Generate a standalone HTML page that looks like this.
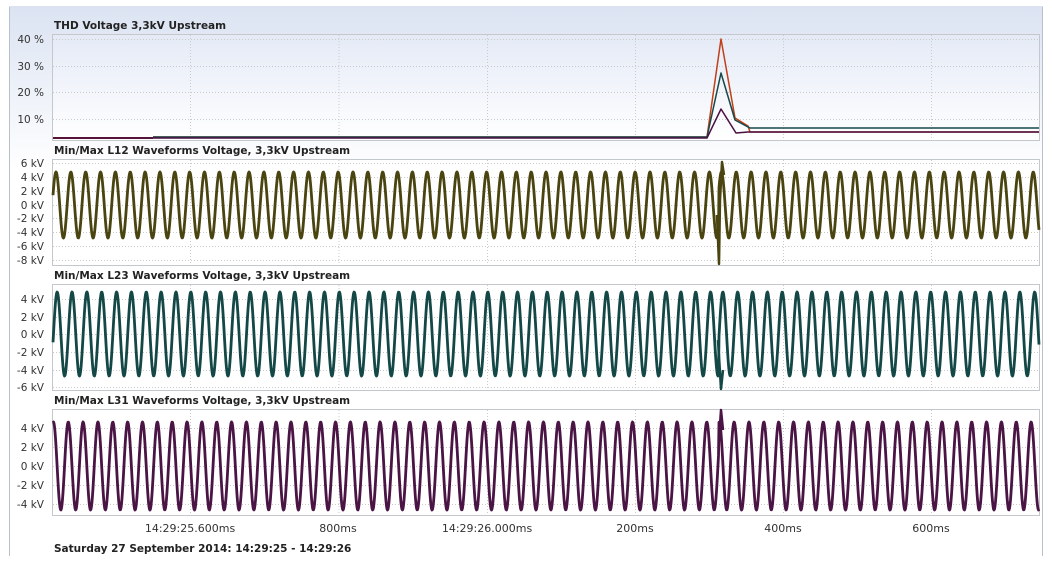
<!DOCTYPE html>
<html><head><meta charset="utf-8"><style>
html,body{margin:0;padding:0;width:1052px;height:566px;overflow:hidden;background:#fff;font-family:"DejaVu Sans","Liberation Sans",sans-serif;}
</style></head><body>
<svg id="s" width="1052" height="566" xmlns="http://www.w3.org/2000/svg" style="position:absolute;left:0;top:0">
<defs>
<linearGradient id="bg" x1="0" y1="0" x2="0" y2="1"><stop offset="0" stop-color="#dbe3f2"/><stop offset="0.3" stop-color="#ffffff"/><stop offset="1" stop-color="#ffffff"/></linearGradient>
<linearGradient id="thd" x1="0" y1="0" x2="0" y2="1"><stop offset="0" stop-color="#e4eaf6"/><stop offset="1" stop-color="#ffffff"/></linearGradient>
</defs>
<rect x="9" y="6" width="1034" height="550" fill="url(#bg)"/>
<line x1="9.5" y1="6" x2="9.5" y2="556" stroke="#b8c0cc"/>
<line x1="1042.5" y1="6" x2="1042.5" y2="556" stroke="#b8c0cc"/>
<line x1="9" y1="6.5" x2="1043" y2="6.5" stroke="#dde3ee"/>
<rect x="52.5" y="34.5" width="987" height="106" fill="url(#thd)" stroke="#c4c8cc"/>
<rect x="52.5" y="159.5" width="987" height="106" fill="#fff" stroke="#c4c8cc"/>
<rect x="52.5" y="284.5" width="987" height="106" fill="#fff" stroke="#c4c8cc"/>
<rect x="52.5" y="409.5" width="987" height="106" fill="#fff" stroke="#c4c8cc"/>
<g id="grid" stroke="#cacaca" stroke-dasharray="1,2" stroke-width="1"></g>
<g id="lines" fill="none" stroke-linejoin="round"></g>
<g font-size="10.5" fill="#222" font-weight="bold" font-family="'DejaVu Sans',sans-serif">
<text x="54" y="29">THD Voltage 3,3kV Upstream</text>
<text x="54" y="154">Min/Max L12 Waveforms Voltage, 3,3kV Upstream</text>
<text x="54" y="279">Min/Max L23 Waveforms Voltage, 3,3kV Upstream</text>
<text x="54" y="404">Min/Max L31 Waveforms Voltage, 3,3kV Upstream</text>
<text x="54" y="552">Saturday 27 September 2014: 14:29:25 - 14:29:26</text>
</g>
<g id="lab" font-size="10.5" fill="#333" text-anchor="end" font-family="'DejaVu Sans',sans-serif"></g>
<g font-size="11" fill="#333" text-anchor="middle" font-family="'DejaVu Sans',sans-serif">
<text x="190" y="532">14:29:25.600ms</text>
<text x="338" y="532">800ms</text>
<text x="487" y="532">14:29:26.000ms</text>
<text x="635" y="532">200ms</text>
<text x="783" y="532">400ms</text>
<text x="931" y="532">600ms</text>
</g>
</svg>
<script>
var NS="http://www.w3.org/2000/svg";
function el(p,t,a,txt){var e=document.createElementNS(NS,t);for(var k in a)e.setAttribute(k,a[k]);if(txt)e.textContent=txt;document.getElementById(p).appendChild(e);}
var vx=[190,338.5,487,635,783,931];
var panels=[[34,140,[39,66,92,119],["40 %","30 %","20 %","10 %"]],
[159,265,[163,177,191,205,218,232,246,260],["6 kV","4 kV","2 kV","0 kV","-2 kV","-4 kV","-6 kV","-8 kV"]],
[284,390,[299,317,334,352,370,387],["4 kV","2 kV","0 kV","-2 kV","-4 kV","-6 kV"]],
[409,515,[428,447,466,485,504],["4 kV","2 kV","0 kV","-2 kV","-4 kV"]]];
panels.forEach(function(p){
 vx.forEach(function(x){el("grid","line",{x1:x+.5,y1:p[0]+1,x2:x+.5,y2:p[1]});});
 p[2].forEach(function(y,i){el("grid","line",{x1:53,y1:y+.5,x2:1039,y2:y+.5});el("lab","text",{x:44,y:y+4},p[3][i]);});
});
el("lines","polyline",{points:"53,138 153,138",stroke:"#7a2020","stroke-width":2});
el("lines","polyline",{points:"153,137 707,137 721,39 735,118 748,126 750,132 1039,132",stroke:"#c0401a","stroke-width":1.5});
el("lines","polyline",{points:"153,137 707,137 721,73 735,120 750,128 1039,128",stroke:"#17484a","stroke-width":1.5});
el("lines","polyline",{points:"53,138 707,138 721,109 736,133 748,132 750,132 1039,132",stroke:"#4a1040","stroke-width":1.5});
function wave(c,A,ph,ph2,col){
 var pts=[],P=14.85;
 for(var x=53;x<=1039;x+=0.5){
  var p=(x<719?ph:ph2);
  var y=c-A*Math.sin(2*Math.PI*(x-53)/P+p);
  pts.push(x.toFixed(1)+","+y.toFixed(1));
 }
 el("lines","polyline",{points:pts.join(" "),stroke:col,"stroke-width":2.8});
}
wave(205,33,0.3,0.3+1.2,"#4a4410");
wave(334,42,-0.2,-0.2+1.1,"#134846");
wave(466,44,1.4,1.4+1.0,"#4a1444");
el("lines","polyline",{points:"717,215 719,264 720,200 722,162 724,175",stroke:"#4a4410","stroke-width":2.5});
el("lines","polyline",{points:"718,340 721,389 723,370",stroke:"#134846","stroke-width":2.5});
el("lines","polyline",{points:"719,440 721,410 723,430",stroke:"#4a1444","stroke-width":2.5});
</script>
</body></html>
